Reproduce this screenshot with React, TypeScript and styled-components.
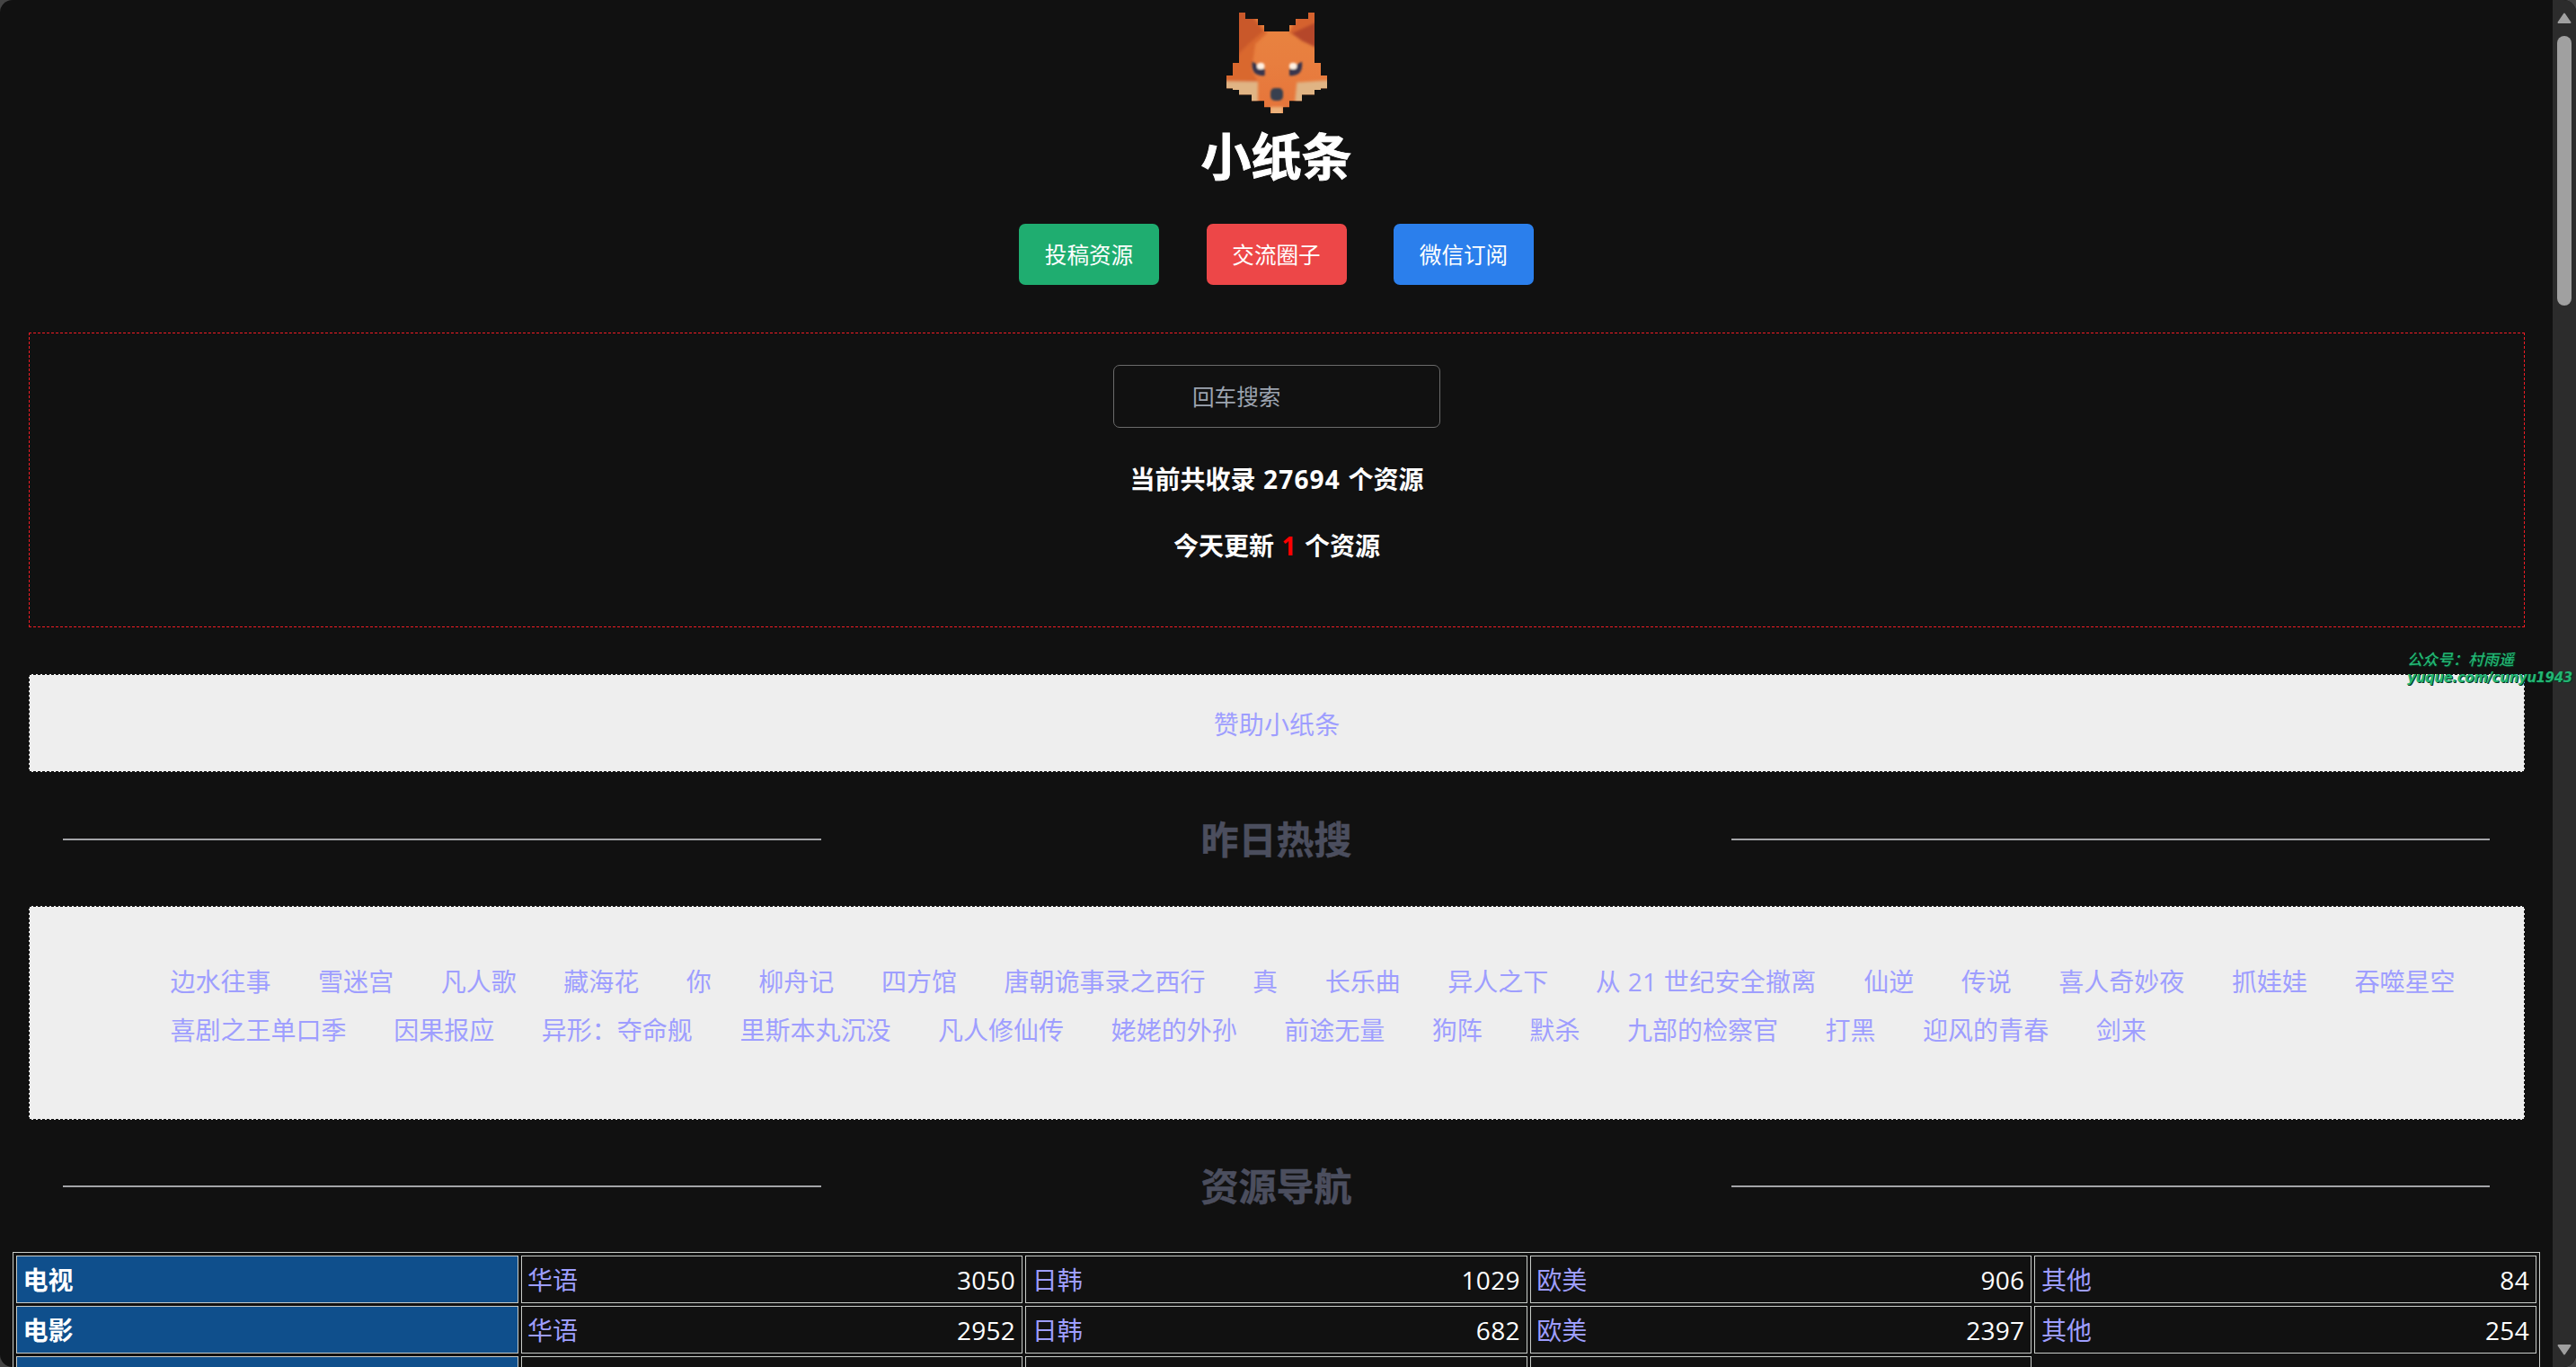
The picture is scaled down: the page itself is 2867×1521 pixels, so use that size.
import React from 'react';
import styled, { createGlobalStyle } from 'styled-components';

const Global = createGlobalStyle`
  * { box-sizing: border-box; }
  html, body { margin: 0; background: #444; overflow: hidden; }
`;
const Window = styled.div`
  position: relative; display: flex; width: 2867px; height: 1521px; overflow: hidden;
  background: #111; color: #fff; border-radius: 14px;
  font: 28px/1.5 "Open Sans", "Noto Sans CJK SC", sans-serif;
`;
const Page = styled.main`
  flex: 1; min-width: 0; padding: 14px 14px 0; display: flex; flex-direction: column;
`;
const Header = styled.header`display: flex; flex-direction: column; align-items: center;`;
const Title = styled.h1`margin: 16px 0 45px; font-size: 56px; line-height: 62px; font-weight: 700; -webkit-text-stroke: 0.9px #fff;`;
const Actions = styled.nav`display: flex; gap: 52.5px;`;
const Action = styled.a<{ $c: string }>`
  width: 156px; height: 68px; border-radius: 7px; background: ${p => p.$c};
  font-size: 24.6px; display: flex; align-items: center; justify-content: center; padding-top: 3px;
`;
const Box = styled.section<{ $h: number; $top: number; $light?: boolean }>`
  margin: ${p => p.$top}px 17px 0 18px; height: ${p => p.$h}px; flex: none;
  border: 1px dashed ${p => (p.$light ? '#111' : '#f01c24')};
  background: ${p => (p.$light ? '#eee' : 'transparent')};
  display: flex; flex-direction: column; align-items: center;
`;
const Search = styled.input`
  width: 364px; height: 70px; margin: 35px 0 0; padding: 0 87px; border: 1px solid #6b6b6b;
  border-radius: 7px; background: transparent; color: #fff; font: inherit; font-size: 24.6px;
  &::placeholder { color: #9ca3af; opacity: 1; }
`;
const Stat = styled.p<{ $top: number }>`margin: ${p => p.$top}px 0 0; line-height: 42px; font-weight: 700; white-space: pre;`;
const Count = styled.span<{ $red?: boolean }>`letter-spacing: 1.2px; color: ${p => (p.$red ? '#f00' : 'inherit')};`;
const Sponsor = styled.a`color: #9e9eff; margin-top: 34px; line-height: 42px; letter-spacing: 0.1px;`;
const Divider = styled.div<{ $top: number; $bottom: number }>`
  margin: ${p => p.$top}px 56px ${p => p.$bottom}px; height: 60px; flex: none;
  display: grid; grid-template-columns: 844px 1fr 844px; align-items: center;
`;
const Rule = styled.hr`width: 100%; height: 2px; border: 0; margin: 0; background: #a3a4a8;`;
const Heading = styled.h2`margin: 0; text-align: center; font-size: 42px; line-height: 60px; font-weight: 700; color: #4b4e5e; -webkit-text-stroke: 0.5px #4b4e5e;`;
const Tags = styled.div`
  width: 100%; padding: 57px 0 0 156.5px; display: flex; flex-direction: column; color: #9e9eff;
`;
const TagRow = styled.div`display: flex; gap: 52.5px; height: 54px; line-height: 53px; white-space: nowrap;`;
const Tag = styled.a<{ $mixed?: boolean }>`letter-spacing: ${p => (p.$mixed ? 0.3 : 0.02)}px;`;
const Table = styled.div`
  border: 1px solid #c8ccc8; padding: 3px; display: grid; flex: none;
  grid-template-columns: repeat(5, 1fr); gap: 3px; height: 300px; grid-auto-rows: 53px;
`;
const Cell = styled.div<{ $head?: boolean }>`
  border: 1px solid #c8ccc8; padding: 1px 7px 0 6.5px; display: flex; justify-content: space-between; align-items: center;
  background: ${p => (p.$head ? '#0f4f8c' : 'transparent')}; font-weight: ${p => (p.$head ? 700 : 400)};
`;
const CellLink = styled.a`color: #9e9eff;`;
const CellCount = styled.span`letter-spacing: 0.3px;`;
const ScrollTrack = styled.aside`
  width: 26px; background: #2c2c2c; display: flex; flex-direction: column; align-items: center; padding: 14px 0 13px;
`;
const Thumb = styled.div`width: 16px; height: 300px; border-radius: 8px; background: #a0a0a0; margin: 14px 0 auto;`;
const Watermark = styled.div`
  position: absolute; left: 2679px; top: 724px; color: #22b573; font-style: italic;
  line-height: 20px; white-space: nowrap; text-shadow: 1px 1px 0 #04361f;
`;
const WatermarkName = styled.div`font-size: 17px; font-weight: 500;`;
const WatermarkLink = styled.div`font: italic 700 15px/20px "DejaVu Sans", sans-serif; letter-spacing: -0.35px;`;

const foxSpans = [
  [2, 3, 13, 14], [2, 5, 11, 14], [2, 6, 10, 14], [2, 14], [2, 14], [2, 14], [2, 14], [2, 14],
  [1, 15], [1, 15], [0, 16], [0, 16], [2, 14], [4, 12], [6, 10], [7, 9],
];

function Fox() {
  return (
    <svg width="112" height="112" viewBox="0 0 16 16">
      <defs>
        <clipPath id="fox">
          {foxSpans.map((s, y) => s.map((x, i) => i % 2 === 0 && <rect key={`${x}-${y}`} x={x} y={y} width={s[i + 1] - x} height="1.02" />))}
          <rect x="1" y="12" width="14" height=".3" />
        </clipPath>
        <linearGradient id="fur" x2="0" y2="1">
          <stop offset="0" stopColor="#e88540" /><stop offset=".5" stopColor="#e87e3f" /><stop offset="1" stopColor="#e6743a" />
        </linearGradient>
        <filter id="soft"><feGaussianBlur stdDeviation=".25" /></filter>
        <filter id="eye"><feGaussianBlur stdDeviation=".14" /></filter>
      </defs>
      <g clipPath="url(#fox)">
        <rect width="16" height="16" fill="url(#fur)" />
        <g filter="url(#soft)">
          <path d="M1-1h2l3.5 4.2L4.6 5 4 9l1 2H-1V5z" fill="#d9672f" />
          <path d="M1.5-1H3l2.8 4L3.5 5 1.5 7z" fill="#c9582c" />
          <path d="M15-1h-3L10 3.2 15 6z" fill="#d5622f" />
          <path d="M15 1.2L10.4 3.3l1.6 1.2L15 5.9z" fill="#b5472a" />
          <path d="M-1 10.9L5 11v4H2z" fill="#e0b484" />
          <path d="M17 10.7l-5.8.4-.4 4H15z" fill="#e0b484" />
          <path d="M7 15h2v2H7z" fill="#edb27b" />
        </g>
        <g filter="url(#eye)">
          <path d="M4.1 7.8C3.9 9.4 4.6 10.2 6.1 10L6.1 9z" fill="#38364d" />
          <path d="M12 7.8c.2 1.6-.5 2.4-2 2.2L10 9z" fill="#38364d" />
          <ellipse cx="5.45" cy="8.5" rx=".62" ry=".55" fill="#fff0e2" />
          <ellipse cx="10.6" cy="8.5" rx=".62" ry=".55" fill="#fff0e2" />
          <rect x="7" y="12" width="2" height="2" rx=".7" fill="#394150" />
        </g>
      </g>
    </svg>
  );
}

const Arrow = ({ down }: { down?: boolean }) => (
  <svg width="16" height="12" viewBox="0 0 16 12">
    <path d={down ? 'M1.5 1h13L8 10.5z' : 'M1.5 11h13L8 1.5z'} fill="#a0a0a0" stroke="#a0a0a0" strokeWidth="2" strokeLinejoin="round" />
  </svg>
);

const tags = [
  ['边水往事', '雪迷宫', '凡人歌', '藏海花', '你', '柳舟记', '四方馆', '唐朝诡事录之西行', '真', '长乐曲', '异人之下', '从 21 世纪安全撤离', '仙逆', '传说', '喜人奇妙夜', '抓娃娃', '吞噬星空'],
  ['喜剧之王单口季', '因果报应', '异形：夺命舰', '里斯本丸沉没', '凡人修仙传', '姥姥的外孙', '前途无量', '狗阵', '默杀', '九部的检察官', '打黑', '迎风的青春', '剑来'],
];
const rows: [string, [string, number][]][] = [
  ['电视', [['华语', 3050], ['日韩', 1029], ['欧美', 906], ['其他', 84]]],
  ['电影', [['华语', 2952], ['日韩', 682], ['欧美', 2397], ['其他', 254]]],
];

export default function App() {
  return (
    <Window>
      <Global />
      <Page>
        <Header>
          <Fox />
          <Title>小纸条</Title>
          <Actions>
            <Action $c="#1fad70">投稿资源</Action>
            <Action $c="#ed4748">交流圈子</Action>
            <Action $c="#2b7fec">微信订阅</Action>
          </Actions>
        </Header>
        <Box $h={328} $top={53}>
          <Search placeholder="回车搜索" />
          <Stat $top={36}>当前共收录<Count> 27694 </Count>个资源</Stat>
          <Stat $top={32}>今天更新<Count $red> 1 </Count>个资源</Stat>
        </Box>
        <Box $h={109} $top={52} $light><Sponsor>赞助小纸条</Sponsor></Box>
        <Divider $top={45} $bottom={44}><Rule /><Heading>昨日热搜</Heading><Rule /></Divider>
        <Box $h={238} $top={0} $light>
          <Tags>
            {tags.map((r, i) => (
              <TagRow key={i}>{r.map(t => <Tag key={t} $mixed={/\d/.test(t)}>{t}</Tag>)}</TagRow>
            ))}
          </Tags>
        </Box>
        <Divider $top={44} $bottom={43}><Rule /><Heading>资源导航</Heading><Rule /></Divider>
        <Table>
          {rows.map(([name, cells]) => (
            <React.Fragment key={name}>
              <Cell $head>{name}</Cell>
              {cells.map(([k, v]) => <Cell key={k}><CellLink>{k}</CellLink><CellCount>{v}</CellCount></Cell>)}
            </React.Fragment>
          ))}
          <Cell $head /><Cell /><Cell /><Cell />
        </Table>
      </Page>
      <ScrollTrack><Arrow /><Thumb /><Arrow down /></ScrollTrack>
      <Watermark>
        <WatermarkName>公众号：村雨遥</WatermarkName>
        <WatermarkLink>yuque.com/cunyu1943</WatermarkLink>
      </Watermark>
    </Window>
  );
}
